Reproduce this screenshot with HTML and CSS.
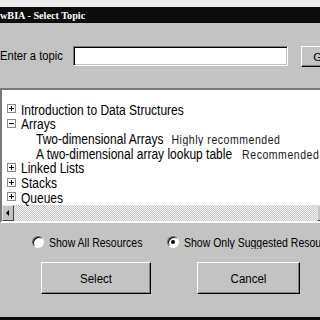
FILE: index.html
```html
<!DOCTYPE html>
<html>
<head>
<meta charset="utf-8">
<link rel="stylesheet" href="styles.css">
</head>
<body>
<div class="window">
  <div class="top-strip"></div>
  <div class="titlebar">wBIA - Select Topic</div>
  <div class="topic-row">
    <label class="topic-label">Enter a topic</label>
    <div class="topic-input"></div>
    <div class="btn go-btn">Go</div>
  </div>
  <div class="list">
    <div class="tree">
      <div class="row"><svg class="exp" width="9" height="9" viewBox="0 0 9 9"><rect x="0.5" y="0.5" width="8" height="8" fill="#fff" stroke="#8a8a8a"/><path d="M2 4.5h5M4.5 2v5" stroke="#000"/></svg><span class="t">Introduction to Data Structures</span></div>
      <div class="row"><svg class="exp" width="9" height="9" viewBox="0 0 9 9"><rect x="0.5" y="0.5" width="8" height="8" fill="#fff" stroke="#8a8a8a"/><path d="M2 4.5h5" stroke="#000"/></svg><span class="t">Arrays</span></div>
      <div class="row child"><span class="t">Two-dimensional Arrays</span><span class="t note">Highly recommended</span></div>
      <div class="row child"><span class="t">A two-dimensional array lookup table</span><span class="t note note2">Recommended</span></div>
      <div class="row"><svg class="exp" width="9" height="9" viewBox="0 0 9 9"><rect x="0.5" y="0.5" width="8" height="8" fill="#fff" stroke="#8a8a8a"/><path d="M2 4.5h5M4.5 2v5" stroke="#000"/></svg><span class="t">Linked Lists</span></div>
      <div class="row"><svg class="exp" width="9" height="9" viewBox="0 0 9 9"><rect x="0.5" y="0.5" width="8" height="8" fill="#fff" stroke="#8a8a8a"/><path d="M2 4.5h5M4.5 2v5" stroke="#000"/></svg><span class="t">Stacks</span></div>
      <div class="row"><svg class="exp" width="9" height="9" viewBox="0 0 9 9"><rect x="0.5" y="0.5" width="8" height="8" fill="#fff" stroke="#8a8a8a"/><path d="M2 4.5h5M4.5 2v5" stroke="#000"/></svg><span class="t">Queues</span></div>
    </div>
    <div class="hscroll">
      <div class="sbtn"><svg width="12" height="16" viewBox="0 0 12 16"><path d="M4 8l3-3v6z" fill="#000"/></svg></div>
      <div class="track"></div>
      <div class="sbtn"><svg width="12" height="16" viewBox="0 0 12 16"><path d="M8 8l-3-3v6z" fill="#000"/></svg></div>
    </div>
  </div>
  <div class="radio-row">
    <div class="opt opt1"><span class="radio"></span><span class="t">Show All Resources</span></div>
    <div class="opt"><span class="radio checked"></span><span class="t">Show Only Suggested Resources</span></div>
  </div>
  <div class="btn-row">
    <div class="btn action select-btn"><span class="t">Select</span></div>
    <div class="btn action cancel-btn"><span class="t">Cancel</span></div>
  </div>
  <div class="bottom-bar"></div>
</div>
</body>
</html>
```
FILE: styles.css
```css
html, body {
  margin: 0;
  padding: 0;
}
body {
  width: 320px;
  height: 320px;
  overflow: hidden;
  background: #c3c3c3;
  font-family: "Liberation Sans", Arial, sans-serif;
  color: #000;
}
.window {
  width: 320px;
  height: 320px;
  display: flex;
  flex-direction: column;
  overflow: hidden;
}
.t {
  display: inline-block;
  transform: scaleY(1.15);
}
.top-strip {
  height: 7px;
  background: #ededed;
  flex: none;
}
.titlebar {
  height: 16px;
  flex: none;
  background: #0c0c0c;
  color: #fff;
  font-family: "Liberation Serif", "Times New Roman", serif;
  font-weight: bold;
  font-size: 10.2px;
  line-height: 16px;
  padding-top: 1px;
  box-sizing: border-box;
  white-space: nowrap;
}
.topic-row {
  margin-top: 23px;
  display: flex;
  align-items: flex-start;
  flex: none;
  height: 21px;
}
.topic-label {
  width: 73px;
  flex: none;
  font-size: 11.2px;
  line-height: 20px;
  white-space: nowrap;
  transform: scaleY(1.12);
}
.topic-input {
  width: 215px;
  height: 20px;
  flex: none;
  box-sizing: border-box;
  background: #fff;
  border: 1px solid;
  border-color: #7a7a7a #fff #fff #7a7a7a;
  box-shadow: inset 1px 1px 0 #000, inset -1px -1px 0 #c3c3c3;
}
.btn {
  box-sizing: border-box;
  background: #c3c3c3;
  border: 1px solid;
  border-color: #fff #000 #000 #fff;
  box-shadow: inset -1px -1px 0 #808080;
  display: flex;
  align-items: center;
  justify-content: center;
  white-space: nowrap;
}
.go-btn {
  margin-left: 13px;
  width: 40px;
  height: 21px;
  flex: none;
  font-size: 11.5px;
}
.list {
  margin-top: 21px;
  width: 329px;
  height: 135px;
  flex: none;
  box-sizing: border-box;
  background: #fff;
  border: 2px solid;
  border-color: #7a7a7a #fff #fff #7a7a7a;
  border-right: none;
  display: flex;
  flex-direction: column;
}
.tree {
  padding-top: 12.5px;
  flex: 1;
}
.row {
  height: 14.7px;
  line-height: 14.7px;
  font-size: 12px;
  display: flex;
  align-items: center;
  white-space: nowrap;
}
.exp {
  margin-left: 5px;
  margin-right: 5px;
  margin-top: -2px;
  flex: none;
}
.row.child {
  padding-left: 34px;
}
.note {
  margin-left: 8px;
  font-size: 10.5px;
  letter-spacing: 0.55px;
  color: #1a1a1a;
}
.note2 {
  margin-left: 10px;
}
.hscroll {
  height: 16px;
  flex: none;
  display: flex;
}
.sbtn {
  width: 12px;
  height: 16px;
  flex: none;
  box-sizing: border-box;
  background: #c3c3c3;
  border: 1px solid;
  border-color: #e6e6e6 #404040 #404040 #e6e6e6;
}
.sbtn svg {
  display: block;
  margin: -1px;
}
.track {
  flex: 1;
  background: repeating-conic-gradient(#f2f2f2 0 25%, #c8c8c8 0 50%) 0 0 / 2px 2px;
}
.radio-row {
  margin-top: 13px;
  height: 12px;
  flex: none;
  display: flex;
  padding-left: 32px;
  font-size: 10.5px;
  white-space: nowrap;
}
.opt {
  display: flex;
  align-items: center;
  gap: 5px;
}
.opt1 {
  width: 135px;
  flex: none;
}
.radio {
  width: 12px;
  height: 12px;
  box-sizing: border-box;
  border-radius: 50%;
  background: #fff;
  border: 1px solid;
  border-color: #6a6a6a #fff #fff #6a6a6a;
  box-shadow: inset 1px 1px 0 #000;
  flex: none;
  position: relative;
}
.radio.checked::after {
  content: "";
  position: absolute;
  left: 3px;
  top: 3px;
  width: 4px;
  height: 4px;
  border-radius: 50%;
  background: #000;
}
.btn-row {
  margin-top: 14px;
  display: flex;
  flex: none;
  padding-left: 41px;
  gap: 46px;
}
.action {
  height: 32px;
  font-size: 11.5px;
}
.select-btn {
  width: 110px;
}
.cancel-btn {
  width: 103px;
}
.bottom-bar {
  margin-top: auto;
  height: 3px;
  background: #0c0c0c;
  flex: none;
}
```
